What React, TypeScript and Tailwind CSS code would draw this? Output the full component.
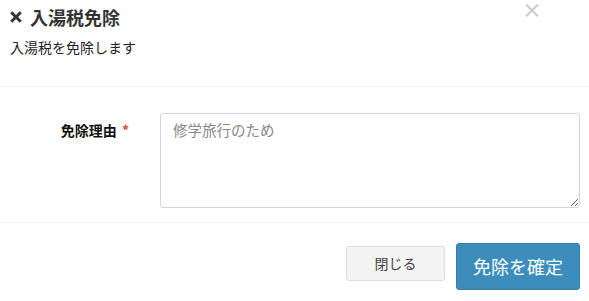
import React from 'react';

const font = { fontFamily: '"Noto Sans CJK JP", "Liberation Sans", sans-serif' };

export default function App() {
  return (
    <div className="relative w-[589px] h-[301px] bg-white text-[#333] overflow-hidden" style={font}>
      {/* Close */}
      <button className="absolute left-[522px] top-0 text-[20px] font-bold leading-[20px] text-[#cccccc]">
        ×
      </button>

      {/* Header */}
      <div className="h-[87px] border-b border-[#f4f4f4] pl-[10px] pt-[5px]">
        <h4 className="flex items-center gap-[8px] text-[18px] font-bold leading-[24px] text-[#333]">
          <svg viewBox="0 0 12 12" className="h-[12px] w-[12px]" aria-hidden>
            <path d="M2.3 0.2 L6 3.9 L9.7 0.2 L11.8 2.3 L8.1 6 L11.8 9.7 L9.7 11.8 L6 8.1 L2.3 11.8 L0.2 9.7 L3.9 6 L0.2 2.3 Z" fill="#333" />
          </svg>
          入湯税免除
        </h4>
        <p className="mt-[8px] text-[14px] leading-[20px] text-[#222]">入湯税を免除します</p>
      </div>

      {/* Body */}
      <div className="flex h-[136px] border-b border-[#f4f4f4] pt-[26px]">
        <label className="w-[145px] shrink-0 pr-[16px] pt-[7px] text-right text-[14px] font-bold leading-[20px] text-[#111]">
          免除理由 <span className="ml-[2px] text-[#dd4b39]">*</span>
        </label>
        <textarea
          placeholder="修学旅行のため"
          className="ml-[15px] h-[95px] w-[420px] rounded-[3px] border border-[#d2d6de] px-[12px] py-[6px] text-[14.5px] leading-[20px] text-[#555] placeholder:text-[#888] outline-none"
          style={font}
        />
      </div>

      {/* Footer */}
      <div className="flex items-start justify-end gap-[11px] pr-[9px] pt-[20px]">
        <button className="mt-[3px] h-[35px] w-[99px] rounded-[3px] border border-[#ddd] bg-[#f4f4f4] text-[14px] text-[#444]">
          閉じる
        </button>
        <button className="h-[47px] w-[124px] rounded-[3px] border border-[#367fa9] bg-[#3c8dbc] text-[18px] text-white">
          免除を確定
        </button>
      </div>
    </div>
  );
}
